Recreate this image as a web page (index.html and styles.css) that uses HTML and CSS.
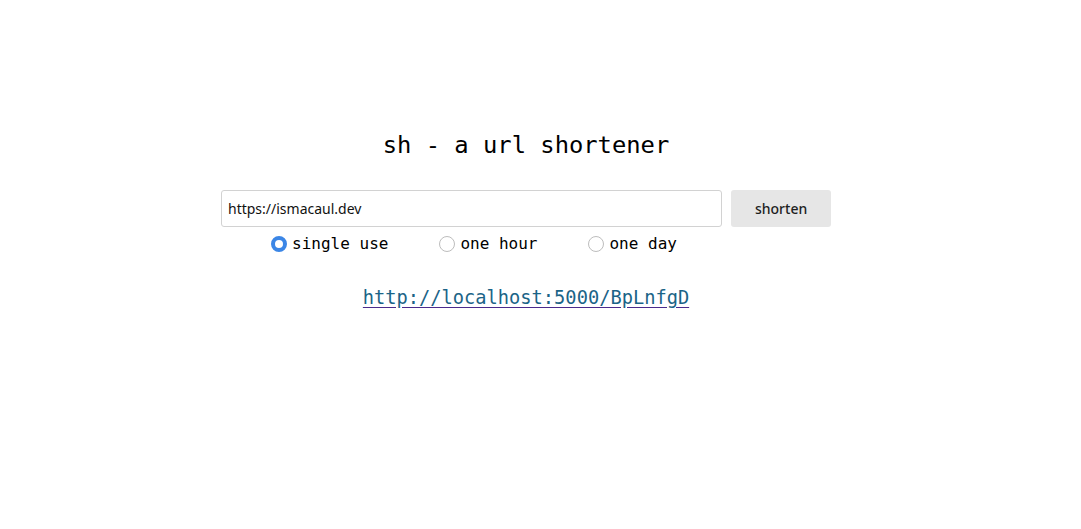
FILE: index.html
```html
<!DOCTYPE html>
<html lang="en">
<head>
<meta charset="utf-8">
<title>sh - a url shortener</title>
<link rel="stylesheet" href="styles.css">
</head>
<body>
<main class="page">
  <h1 class="title">sh - a url shortener</h1>
  <form class="form">
    <div class="row">
      <input class="url" type="text" value="https://ismacaul.dev">
      <button class="btn" type="button">shorten</button>
    </div>
    <div class="options">
      <label class="opt"><input class="radio" type="radio" name="exp" checked><span>single use</span></label>
      <label class="opt"><input class="radio" type="radio" name="exp"><span>one hour</span></label>
      <label class="opt"><input class="radio" type="radio" name="exp"><span>one day</span></label>
    </div>
  </form>
  <p class="result"><a class="link" href="#">http://localhost:5000/BpLnfgD</a></p>
</main>
</body>
</html>
```
FILE: styles.css
```css
html, body {
  margin: 0;
  padding: 0;
  background: #fff;
}
body {
  font-family: "DejaVu Sans Mono", monospace;
  color: #000;
}
.page {
  width: 610px;
  margin-left: 221px;
  padding-top: 130px;
  display: flex;
  flex-direction: column;
  align-items: center;
}
.title {
  margin: 0;
  font-size: 23.8px;
  font-weight: 400;
  line-height: 30px;
}
.form {
  margin-top: 30px;
  width: 610px;
}
.row {
  display: flex;
  gap: 9px;
  height: 37px;
}
.url {
  box-sizing: border-box;
  width: 502px;
  height: 37px;
  margin: 0;
  border: 1px solid #d2d2d2;
  border-radius: 3px;
  padding: 0 6px;
  font-family: "Noto Sans", "Open Sans", sans-serif;
  font-size: 14px;
  color: #111;
  outline: none;
}
.btn {
  width: 100px;
  height: 37px;
  margin: 0;
  border: none;
  border-radius: 3px;
  background: #e6e6e6;
  font-family: "Noto Sans", "Open Sans", sans-serif;
  font-size: 14px;
  font-weight: 500;
  color: #1e1e1e;
  padding: 0;
}
.options {
  box-sizing: border-box;
  width: 502px;
  margin-top: 7px;
  padding-left: 4px;
  height: 20px;
  display: flex;
  justify-content: center;
  gap: 51px;
}
.opt {
  display: flex;
  align-items: center;
  gap: 5px;
  font-size: 16px;
  line-height: 20px;
}
.radio {
  appearance: none;
  -webkit-appearance: none;
  box-sizing: border-box;
  width: 16px;
  height: 16px;
  margin: 0;
  border: 1px solid #bdbdbd;
  border-radius: 50%;
  background: #fff;
}
.radio:checked {
  border: 4px solid #3b86e6;
}
.result {
  margin: 32px 0 0;
  font-size: 18.7px;
  line-height: 24px;
}
.link {
  color: #1b6487;
  text-decoration: underline;
  text-decoration-color: #4a2a8c;
  text-underline-offset: 3px;
}
```
